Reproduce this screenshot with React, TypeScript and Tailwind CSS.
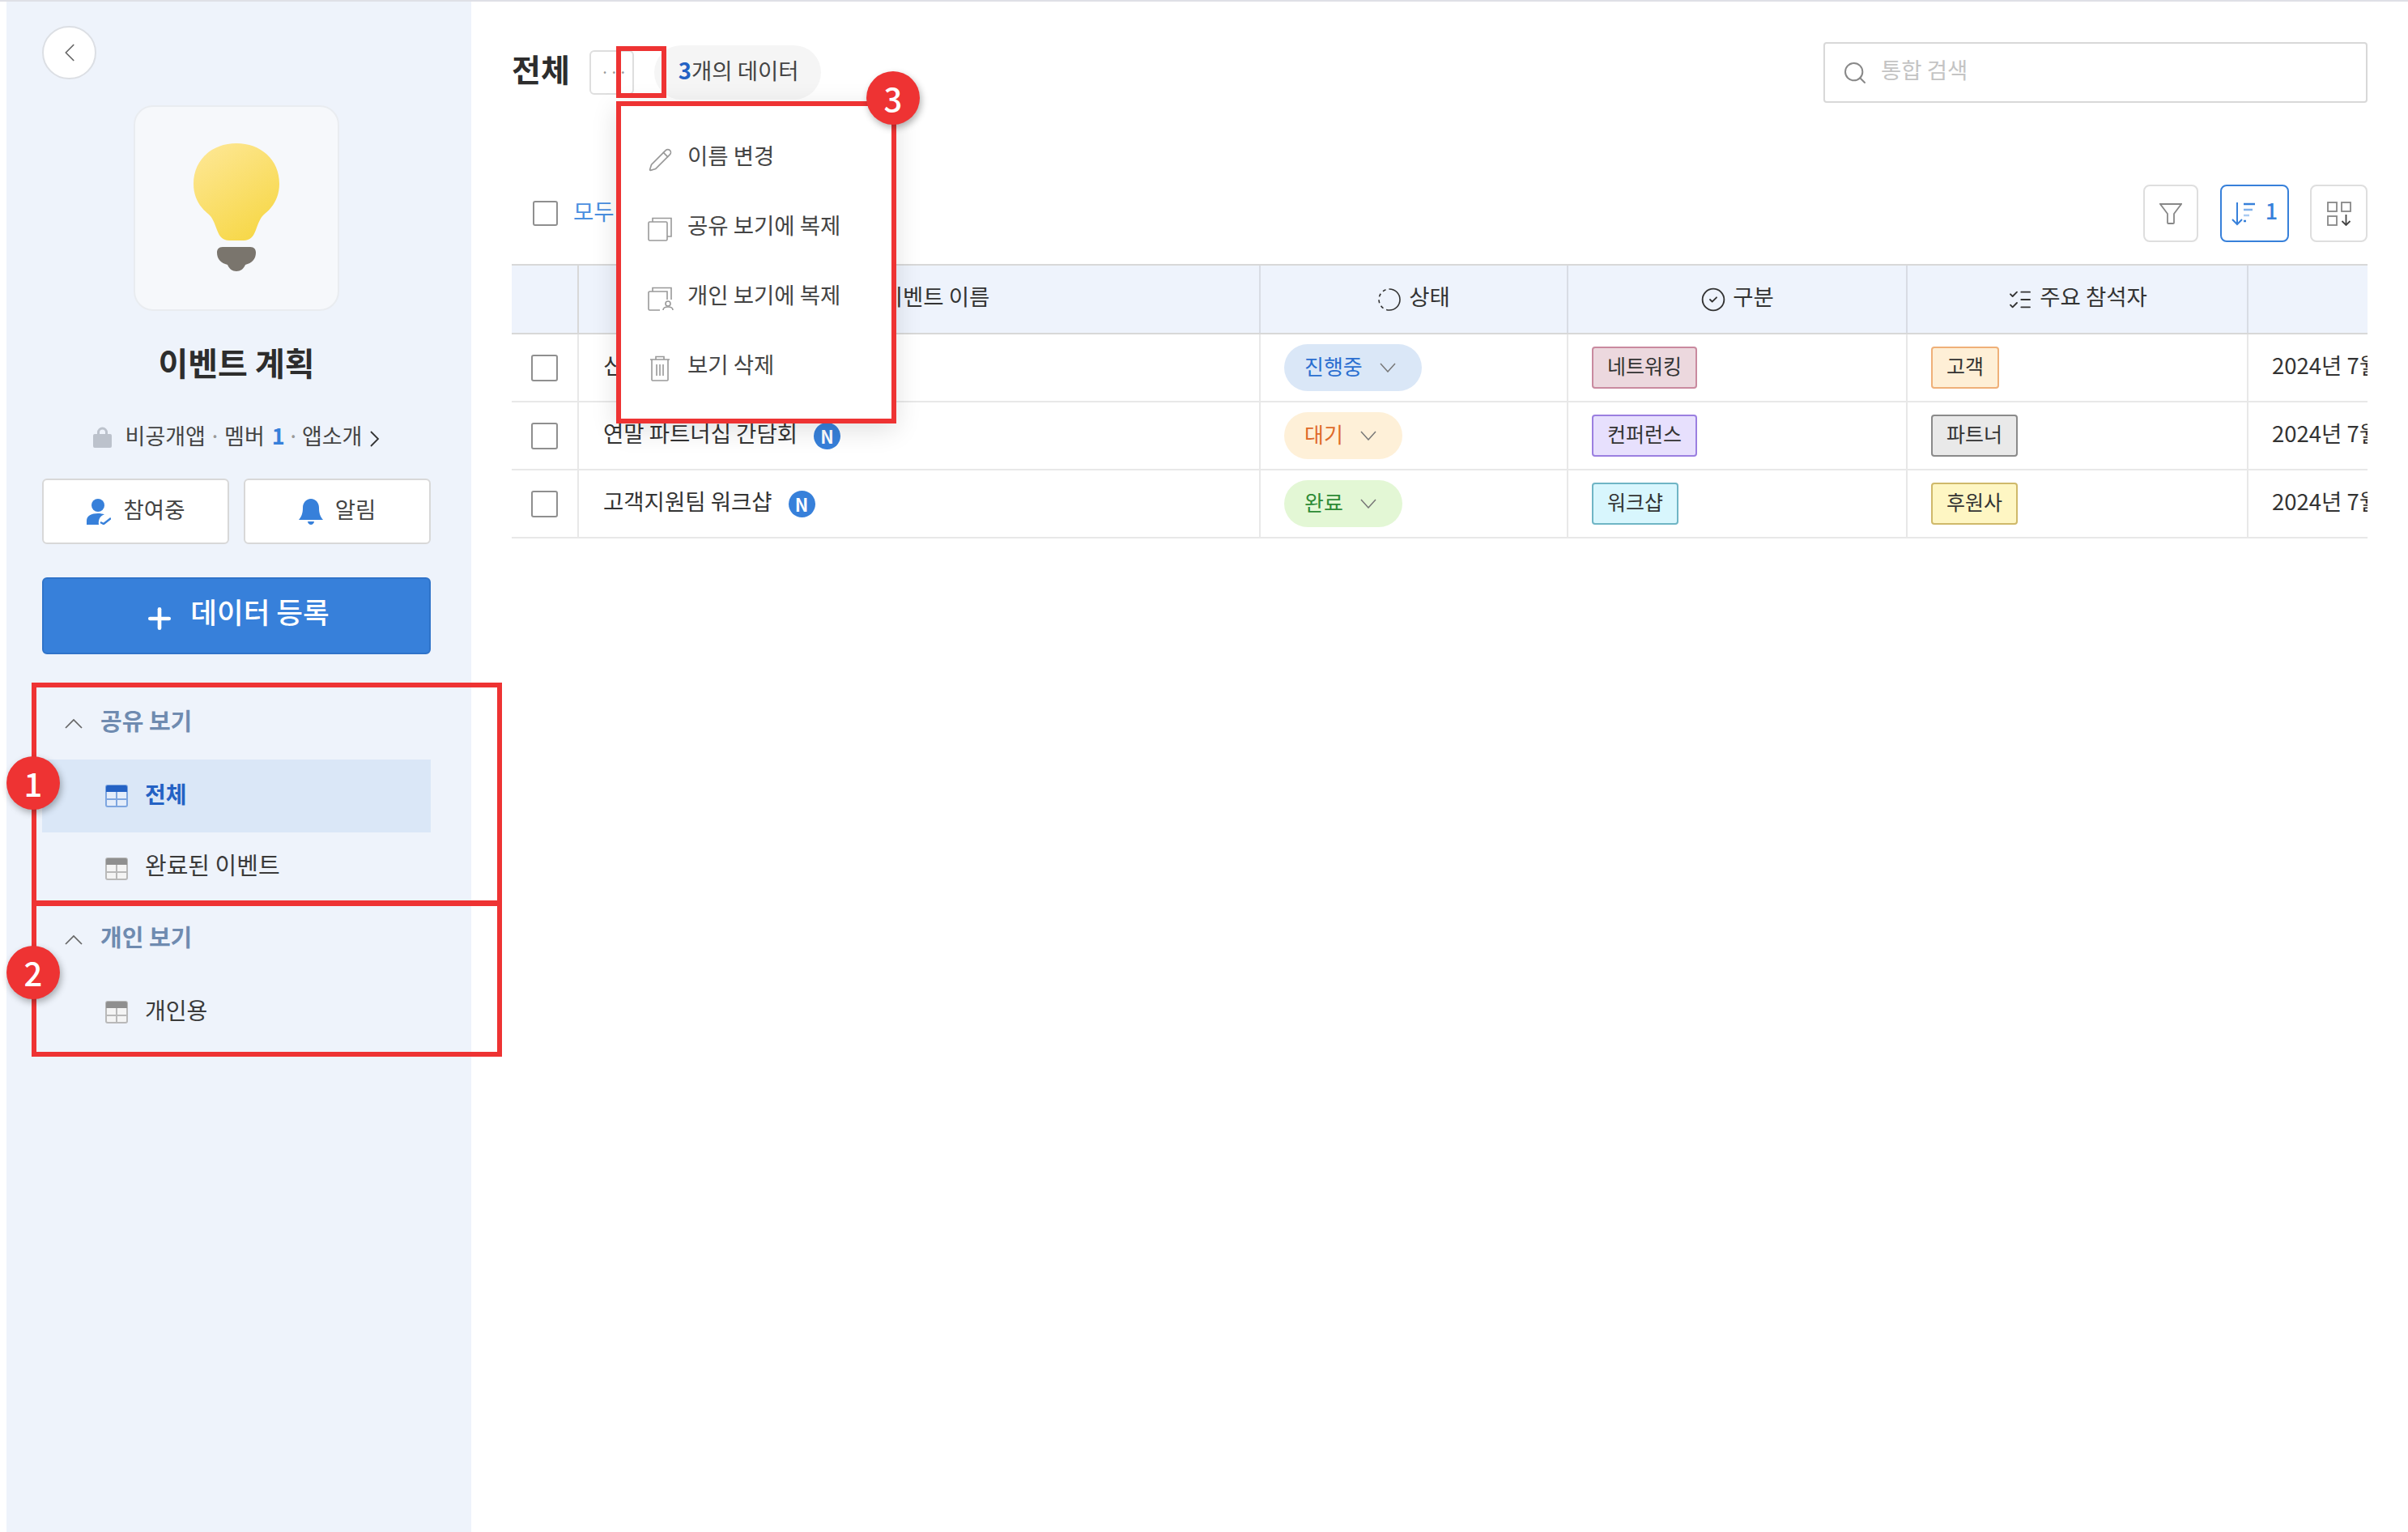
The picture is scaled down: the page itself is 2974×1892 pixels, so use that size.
import { ChevronLeft, CircleCheck, ListChecks, Pencil, Plus, Search, Type } from 'lucide-react';

const fontStack = 'font-["Noto_Sans_CJK_KR","Noto_Sans",sans-serif]';

type Row = {
  name: string;
  isNew: boolean;
  status: string;
  statusClass: string;
  kind: string;
  kindClass: string;
  guest: string;
  guestClass: string;
  date: string;
};

const rows: Row[] = [
  {
    name: '신제품 출시',
    isNew: false,
    status: '진행중',
    statusClass: 'bg-[#dae7f7] text-[#2b6fd0]',
    kind: '네트워킹',
    kindClass: 'bg-[#ecd8de] border-[#c98a9f]',
    guest: '고객',
    guestClass: 'bg-[#feefd6] border-[#efb078]',
    date: '2024년 7월 15일',
  },
  {
    name: '연말 파트너십 간담회',
    isNew: true,
    status: '대기',
    statusClass: 'bg-[#fef0d8] text-[#df6a2a]',
    kind: '컨퍼런스',
    kindClass: 'bg-[#e7e0fd] border-[#9b7fe0]',
    guest: '파트너',
    guestClass: 'bg-[#e9e9e9] border-[#8a8a8a]',
    date: '2024년 7월 20일',
  },
  {
    name: '고객지원팀 워크샵',
    isNew: true,
    status: '완료',
    statusClass: 'bg-[#e3f7d5] text-[#2e8b36]',
    kind: '워크샵',
    kindClass: 'bg-[#d8f6fd] border-[#6fb5c5]',
    guest: '후원사',
    guestClass: 'bg-[#fef6c3] border-[#cfb96a]',
    date: '2024년 7월 25일',
  },
];

const Bulb = () => (
  <svg width="106" height="164" viewBox="0 0 106 164" fill="none">
    <defs>
      <linearGradient id="bulb" x1="15" y1="10" x2="80" y2="110" gradientUnits="userSpaceOnUse">
        <stop offset="0" stopColor="#fde68f" />
        <stop offset="1" stopColor="#f7d84a" />
      </linearGradient>
    </defs>
    <path
      d="M53 0C23 0 0 20 0 50c0 17 8 29 18 37 6 5 8 12 11 20 3 8 7 13 15 13h18c8 0 12-5 15-13 3-8 5-15 11-20 10-8 18-20 18-37C106 20 83 0 53 0Z"
      fill="url(#bulb)"
    />
    <path
      d="M36 128h34c5 0 7 3 7 7 0 8-5 13-13 15-2 5-6 8-11 8s-9-3-11-8c-8-2-13-7-13-15 0-4 2-7 7-7Z"
      fill="#7a756d"
    />
  </svg>
);

const TableIcon = ({ active }: { active?: boolean }) => {
  const solid = active ? '#2462c4' : '#8f8f8f';
  const line = active ? '#7ea6e0' : '#b9b9b9';
  return (
    <svg width="28" height="28" viewBox="0 0 28 28" fill="none" className="shrink-0">
      <rect x="1" y="1" width="26" height="26" rx="2" fill={active ? '#e4edfa' : '#f4f4f4'} stroke={line} strokeWidth="2" />
      <path d="M1 3a2 2 0 0 1 2-2h22a2 2 0 0 1 2 2v6H1V3Z" fill={solid} />
      <path d="M14 9v18M1 18h26" stroke={line} strokeWidth="2" />
    </svg>
  );
};

const StatusIcon = () => (
  <svg width="30" height="30" viewBox="0 0 30 30" fill="none" stroke="#333" strokeWidth="1.6">
    <path d="M15 2a13 13 0 0 1 0 26" />
    <path d="M15 28A13 13 0 0 1 15 2" strokeDasharray="4 4" />
  </svg>
);

const SmallChevron = () => (
  <svg width="20" height="12" viewBox="0 0 20 12" fill="none" stroke="#777" strokeWidth="1.5">
    <path d="M1 1l9 10 9-10" />
  </svg>
);

const SectionChevron = () => (
  <svg width="22" height="13" viewBox="0 0 22 13" fill="none" stroke="#666" strokeWidth="1.7" className="mt-[6px] shrink-0">
    <path d="M1 12L11 2l10 10" />
  </svg>
);

const CopyIcon = () => (
  <svg width="30" height="30" viewBox="0 0 30 30" fill="none" stroke="#999" strokeWidth="1.6">
    <rect x="1" y="6" width="23" height="23" rx="1.5" />
    <path d="M6 6V1.5h23V24h-5" />
  </svg>
);

const CopyUserIcon = () => (
  <svg width="32" height="30" viewBox="0 0 32 30" fill="none" stroke="#999" strokeWidth="1.6">
    <path d="M15 29H2.5A1.5 1.5 0 0 1 1 27.5V7.500A1.500 1.500 0 0 1 2.500 6H24v10" />
    <path d="M6 6V1.500h23V16" />
    <circle cx="25" cy="21" r="3" />
    <path d="M19 29c0-3 3-4 6-4s6 1 6 4" />
  </svg>
);

const TrashIcon = () => (
  <svg width="30" height="32" viewBox="0 0 30 32" fill="none" stroke="#999" strokeWidth="1.6">
    <path d="M3 5h24M10 5V1.500h10V5" />
    <path d="M5 5v25a1 1 0 0 0 1 1h18a1 1 0 0 0 1-1V5" />
    <path d="M11 11v14M15 11v14M19 11v14" />
  </svg>
);

const SortIcon = () => (
  <svg width="30" height="30" viewBox="0 0 30 30" fill="none">
    <path d="M7 1v27M1 22l6 6 6-6" stroke="#3780da" strokeWidth="2" />
    <path d="M15 3h14" stroke="#3780da" strokeWidth="2.500" />
    <path d="M15 10h11" stroke="#7fb0ea" strokeWidth="2.500" />
    <path d="M15 17h7" stroke="#a9cbf2" strokeWidth="2.500" />
    <path d="M15 24h3" stroke="#3780da" strokeWidth="2.500" />
  </svg>
);

const ViewIcon = () => (
  <svg width="30" height="30" viewBox="0 0 30 30" fill="none" stroke="#888" strokeWidth="1.800">
    <rect x="1" y="1" width="11" height="11" />
    <rect x="18" y="1" width="11" height="11" />
    <rect x="1" y="18" width="11" height="11" />
    <path d="M23.500 16v13M18.500 24l5 5 5-5" stroke="#444" />
  </svg>
);

const FilterIcon = () => (
  <svg width="28" height="26" viewBox="0 0 28 26" fill="none" stroke="#888" strokeWidth="1.800">
    <path d="M1 1h26l-9 12v11a1 1 0 0 1-1 1h-6a1 1 0 0 1-1-1V13L1 1Z" />
  </svg>
);

const PersonIcon = () => (
  <svg width="30" height="32" viewBox="0 0 30 32" fill="#3780da">
    <circle cx="14" cy="8" r="8" />
    <path d="M0 32v-5c0-6 6-9 14-9 3 0 6 .5 8 1.500-5 1-8 6-7 12.500H0Z" />
    <path d="M17 29l4 2 9-7" fill="none" stroke="#3780da" strokeWidth="2.500" />
  </svg>
);

const BellIcon = () => (
  <svg width="30" height="32" viewBox="0 0 30 32" fill="#3780da">
    <path d="M15 0c6 0 10 5 10 11 0 6 1 10 5 15H0c4-5 5-9 5-15C5 5 9 0 15 0Z" />
    <path d="M11 28h8c0 2-2 4-4 4s-4-2-4-4Z" />
  </svg>
);

const LockIcon = () => (
  <svg width="23" height="26" viewBox="0 0 23 26" fill="#bcc2cc">
    <path d="M5 10V7a6.500 6.500 0 0 1 13 0v3h-3V7a3.500 3.500 0 0 0-7 0v3H5Z" />
    <rect x="0" y="9" width="23" height="17" rx="2" />
  </svg>
);

const DetailChevron = () => (
  <svg width="12" height="22" viewBox="0 0 12 22" fill="none" stroke="#333" strokeWidth="1.8" className="ml-[10px] mt-[4px]">
    <path d="M1 2l9 9-9 9" />
  </svg>
);

const NewBadge = () => (
  <span className="ml-[20px] flex h-[33px] w-[33px] items-center justify-center rounded-full bg-[#3780da] text-[22px] font-bold leading-none text-white">
    N
  </span>
);

const Checkbox = () => (
  <span className="block h-[33px] w-[33px] rounded-[3px] border-2 border-[#8f8f8f] bg-white" />
);

const Sidebar = () => (
  <aside className="ml-[8px] flex w-[574px] shrink-0 flex-col bg-[#eef3fb] pl-[44px] pr-[50px] pt-[30px]">
    <button className="flex h-[66px] w-[67px] items-center justify-center rounded-full border-2 border-[#dcdfe4] bg-white">
      <ChevronLeft size={38} strokeWidth={1.1} className="text-[#666]" />
    </button>
    <div className="mx-auto mt-[32px] flex h-[254px] w-[254px] items-start justify-center rounded-[24px] border-2 border-[#e9ecf0] bg-[#f6f8fb] pt-[45px]">
      <Bulb />
    </div>
    <h1 className="mt-[35px] text-center text-[40px] font-bold leading-[56px] text-[#2d2d2d]">이벤트 계획</h1>
    <div className="mt-[45px] flex h-[40px] items-center justify-center text-[27px] text-[#444]">
      <LockIcon />
      <span className="ml-[17px] pb-[4px]">비공개앱</span>
      <span className="mx-[4px] pb-[4px] text-[#999]">·</span>
      <span className="pb-[4px]">멤버</span>
      <span className="ml-[9px] pb-[4px] font-bold text-[#3780da]">1</span>
      <span className="mx-[3px] pb-[4px] text-[#999]">·</span>
      <span className="pb-[4px]">앱소개</span>
      <DetailChevron />
    </div>
    <div className="mt-[31px] flex gap-[18px]">
      <button className="flex h-[81px] w-[231px] items-center justify-center gap-[16px] rounded-[6px] border-2 border-[#d8d8d8] bg-white text-[27.5px] text-[#444]">
        <PersonIcon />
        <span className="pb-[5px]">참여중</span>
      </button>
      <button className="flex h-[81px] w-[231px] items-center justify-center gap-[15px] rounded-[6px] border-2 border-[#d8d8d8] bg-white text-[27.5px] text-[#444]">
        <BellIcon />
        <span className="pb-[5px]">알림</span>
      </button>
    </div>
    <button className="mt-[41px] flex h-[95px] w-[480px] items-center justify-center gap-[18px] rounded-[6px] border-2 border-[#2f73c9] bg-[#3780da] text-[35.5px] font-medium text-white">
      <Plus size={40} strokeWidth={2.8} className="mt-[6px]" />
      <span className="pb-[12px]">데이터 등록</span>
    </button>

    <div className="mt-[42px] flex h-[88px] items-center pb-[8px] pl-[28px]">
      <SectionChevron />
      <span className="ml-[22px] text-[29px] font-semibold text-[#6f8bb0]">공유 보기</span>
    </div>
    <div className="flex h-[90px] w-[480px] items-center bg-[#dae7f7] pl-[78px]">
      <TableIcon active />
      <span className="mb-[6px] ml-[21px] text-[28px] font-bold text-[#2462c4]">전체</span>
    </div>
    <div className="flex h-[90px] w-[480px] items-center pl-[78px]">
      <TableIcon />
      <span className="mb-[10px] ml-[21px] text-[29px] text-[#3a3a3a]">완료된 이벤트</span>
    </div>
    <div className="flex h-[87px] items-center pb-[9px] pl-[28px]">
      <SectionChevron />
      <span className="ml-[22px] text-[29px] font-semibold text-[#6f8bb0]">개인 보기</span>
    </div>
    <div className="flex h-[90px] w-[480px] items-center pl-[78px]">
      <TableIcon />
      <span className="mb-[6px] ml-[21px] text-[28px] text-[#3a3a3a]">개인용</span>
    </div>
  </aside>
);

const Table = () => (
  <div className="mt-[27px] w-[2292px] overflow-hidden text-[27.5px] text-[#333]">
    <div className="flex h-[87px] w-[2600px] border-y-2 border-[#d8d8d8] bg-[#eef3fc]">
      <div className="w-[83px] shrink-0 border-r-2 border-[#d8d8d8]" />
      <div className="flex w-[842px] shrink-0 items-center justify-center gap-[12px] border-r-2 border-[#d8dce4]">
        <Type size={30} strokeWidth={1.5} />
        <span className="pb-[8px]">이벤트 이름</span>
      </div>
      <div className="flex w-[380px] shrink-0 items-center justify-center gap-[9px] border-r-2 border-[#d8dce4]">
        <StatusIcon />
        <span className="pb-[8px]">상태</span>
      </div>
      <div className="flex w-[419px] shrink-0 items-center justify-center gap-[8px] border-r-2 border-[#d8dce4]">
        <CircleCheck size={32} strokeWidth={1.4} />
        <span className="pb-[8px]">구분</span>
      </div>
      <div className="flex w-[421px] shrink-0 items-center justify-center gap-[8px] border-r-2 border-[#d8dce4]">
        <ListChecks size={32} strokeWidth={1.4} />
        <span className="pb-[8px]">주요 참석자</span>
      </div>
      <div className="flex-1" />
    </div>
    {rows.map((row) => (
      <div key={row.name} className="flex h-[84px] w-[2600px] border-b-2 border-[#e8e8e8]">
        <div className="flex w-[83px] shrink-0 items-center justify-center border-r-2 border-[#e8e8e8]">
          <Checkbox />
        </div>
        <div className="flex w-[842px] shrink-0 items-center border-r-2 border-[#e8e8e8] pl-[30px]">
          <span className="pb-[6px]">{row.name}</span>
          {row.isNew && <NewBadge />}
        </div>
        <div className="flex w-[380px] shrink-0 items-center border-r-2 border-[#e8e8e8] pl-[29px]">
          <span className={`flex h-[58px] items-center gap-[21px] rounded-full pl-[25px] pr-[32px] text-[26px] ${row.statusClass}`}>
            <span className="pb-[5px]">{row.status}</span>
            <SmallChevron />
          </span>
        </div>
        <div className="flex w-[419px] shrink-0 items-center border-r-2 border-[#e8e8e8] pl-[29px]">
          <span className={`flex h-[52px] items-center rounded-[4px] border-2 px-[17px] pb-[5px] text-[25px] ${row.kindClass}`}>
            {row.kind}
          </span>
        </div>
        <div className="flex w-[421px] shrink-0 items-center border-r-2 border-[#e8e8e8] pl-[29px]">
          <span className={`flex h-[52px] items-center rounded-[4px] border-2 px-[17px] pb-[5px] text-[25px] ${row.guestClass}`}>
            {row.guest}
          </span>
        </div>
        <div className="flex flex-1 items-center whitespace-nowrap pb-[6px] pl-[29px]">{row.date}</div>
      </div>
    ))}
  </div>
);

const Main = () => (
  <main className="flex min-w-0 flex-1 flex-col pl-[50px] pt-[50px]">
    <div className="flex h-[75px] w-[2292px] items-center">
      <h2 className="mb-[10px] text-[39px] font-bold text-[#2d2d2d]">전체</h2>
      <button className="ml-[24px] flex h-[55px] w-[55px] items-center justify-center rounded-[6px] border-2 border-[#dedede] pb-[2px] text-[20px] leading-none text-[#999]">
        <span className="ml-[6px]">···</span>
      </button>
      <div className="ml-[25px] flex h-[67px] w-[206px] items-center rounded-full bg-[#f5f5f5] pl-[30px] text-[27.5px] text-[#444]">
        <span className="pb-[6px]">
          <span className="font-semibold text-[#2462c4]">3</span>개의 데이터
        </span>
      </div>
      <div className="ml-auto flex h-[75px] w-[672px] items-center rounded-[4px] border-2 border-[#d8d8d8] pl-[21px]">
        <Search size={32} strokeWidth={1.5} className="text-[#888]" />
        <span className="mb-[8px] ml-[16px] text-[27.5px] text-[#c4c4c4]">통합 검색</span>
      </div>
    </div>

    <div className="mt-[101px] flex h-[71px] w-[2292px] items-center">
      <span className="ml-[26px] block h-[31px] w-[31px] rounded-[3px] border-2 border-[#8f8f8f]" />
      <span className="mb-[6px] ml-[19px] text-[27.5px] text-[#4a8fe0]">모두 선택</span>
      <button className="ml-auto flex h-[71px] w-[68px] items-center justify-center rounded-[8px] border-2 border-[#dedede]">
        <FilterIcon />
      </button>
      <button className="ml-[27px] flex h-[71px] w-[85px] items-center justify-center gap-[12px] rounded-[8px] border-2 border-[#3780da] text-[27px] font-medium text-[#3780da]">
        <SortIcon />
        <span className="pb-[6px]">1</span>
      </button>
      <button className="ml-[26px] flex h-[71px] w-[71px] items-center justify-center rounded-[8px] border-2 border-[#dedede]">
        <ViewIcon />
      </button>
    </div>

    <Table />
  </main>
);

const menuItems = [
  { label: '이름 변경', icon: <Pencil size={31} strokeWidth={1.3} className="text-[#999]" /> },
  { label: '공유 보기에 복제', icon: <CopyIcon /> },
  { label: '개인 보기에 복제', icon: <CopyUserIcon /> },
  { label: '보기 삭제', icon: <TrashIcon /> },
];

const ViewMenu = () => (
  <div className="absolute left-[761px] top-[123px] flex h-[398px] w-[346px] flex-col justify-center border-[6px] border-[#ee3333] bg-white pl-[33px] shadow-[0_8px_30px_rgba(0,0,0,0.12)]">
    {menuItems.map((item) => (
      <div key={item.label} className="flex h-[86px] items-center text-[27.5px] text-[#444]">
        <span className="mt-[4px] flex w-[49px] shrink-0">{item.icon}</span>
        <span className="pb-[6px]">{item.label}</span>
      </div>
    ))}
  </div>
);

const Marker = ({ n, className }: { n: number; className: string }) => (
  <span
    className={`absolute flex h-[66px] w-[66px] items-center justify-center rounded-full bg-[#ee3333] text-[40px] font-medium leading-none text-white shadow-[2px_4px_8px_rgba(0,0,0,0.3)] ${className}`}
  >
    {n}
  </span>
);

export default function App() {
  return (
    <div className={`relative flex h-[1892px] w-[2974px] overflow-hidden border-t-2 border-[#dfe0e6] bg-white ${fontStack}`}>
      <Sidebar />
      <Main />
      <ViewMenu />

      {/* annotations over the capture */}
      <div className="absolute left-[39px] top-[841px] h-[275px] w-[581px] border-[6px] border-[#ee3333]" />
      <div className="absolute left-[39px] top-[1111px] h-[192px] w-[581px] border-[6px] border-[#ee3333]" />
      <div className="absolute left-[761px] top-[55px] h-[64px] w-[62px] border-[6px] border-[#ee3333]" />
      <Marker n={1} className="left-[8px] top-[932px]" />
      <Marker n={2} className="left-[8px] top-[1166px]" />
      <Marker n={3} className="left-[1070px] top-[86px]" />
    </div>
  );
}
